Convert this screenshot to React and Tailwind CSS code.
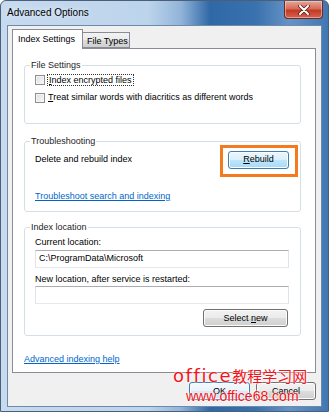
import React from 'react';

const btnBase =
  "h-[18px] flex items-center justify-center rounded-[3px] border text-[9px] leading-none shadow-[inset_0_0_0_1px_#fcfcfc]";
const btnNormal =
  "border-[#707070] bg-[linear-gradient(#f2f2f2_0%,#ebebeb_50%,#dddddd_50%,#cfcfcf_100%)]";
const btnHot =
  "border-[#3c7fb1] bg-[linear-gradient(#eaf6fd_0%,#d9f0fc_50%,#bee6fd_50%,#a7d9f5_100%)]";

const Checkbox = () => (
  <span className="w-[10px] h-[10px] shrink-0 border border-[#8e8f8f] bg-[linear-gradient(135deg,#dcdcdc,#fafafa)] shadow-[inset_0_0_0_1px_#f4f4f4]" />
);

const Group = ({ title, className = "", children }) => (
  <fieldset className={`border border-[#d5dfe5] rounded-[3px] ${className}`}>
    <legend className="ml-[5px] px-[1px] leading-[14px] text-[#1e1e1e]">{title}</legend>
    {children}
  </fieldset>
);

const TextBox = ({ value }) => (
  <div className="h-[18px] flex items-center pl-[3px] bg-white border border-[#e2e3ea] border-t-[#abadb3] border-b-[#e3e9ef]">
    {value}
  </div>
);

const CloseButton = () => (
  <div className="w-[39px] h-[18px] flex items-center justify-center rounded-b-[4px] border border-t-0 border-[#6b2a22] bg-[linear-gradient(#e8a595_0%,#d66c5b_45%,#c23a26_55%,#d4624d_100%)] shadow-[inset_0_0_0_1px_rgba(255,220,210,0.5)]">
    <svg width="12" height="10" viewBox="0 0 12 10">
      <path d="M2 1 L10 9 M10 1 L2 9" stroke="#5a1e16" strokeWidth="3.6" strokeLinecap="round" />
      <path d="M2 1 L10 9 M10 1 L2 9" stroke="#ffffff" strokeWidth="2" strokeLinecap="round" />
    </svg>
  </div>
);

const App = () => {
  return (
    <div className="relative w-[329px] h-[412px] overflow-hidden rounded-t-[6px] border border-[#4c5f77] bg-[linear-gradient(90deg,#c6daf0_0%,#bcd4ec_45%,#92b4d9_55%,#2f68a6_64%,#3a72ae_78%,#6593c6_88%,#4077b3_100%)] font-['Liberation_Sans',Arial,sans-serif] text-[9px] text-black">
      {/* title bar */}
      <div className="h-[24px] flex items-start justify-between pl-[6px] pr-[5px]">
        <span className="mt-[6px] text-[10px] leading-[12px] [text-shadow:0_0_6px_#ffffff]">Advanced Options</span>
        <CloseButton />
      </div>

      {/* client area */}
      <div className="mx-[6px] h-[382px] border border-[#6f8aa8] bg-[#f0f0f0] pt-[3px] pl-[4px] pr-[5px]">
        {/* tabs */}
        <div className="h-[19px] flex items-end">
          <div className="relative z-10 w-[71px] h-[20px] -mb-px border border-b-0 border-[#898c95] bg-white pl-[5px] pt-[3px] leading-[12px]">
            Index Settings
          </div>
          <div className="w-[47px] h-[16px] border border-l-0 border-[#898c95] bg-[linear-gradient(#f2f2f2_0%,#ebebeb_50%,#dddddd_50%,#cfcfcf_100%)] pl-[4px] pt-[2px] leading-[12px]">
            File Types
          </div>
        </div>

        {/* tab panel */}
        <div className="h-[325px] border border-[#898c95] bg-white pt-[9px] pl-[11px] pr-[14px]">
          <Group title="File Settings">
            <div className="pt-[1px] pb-[18px] pl-[10px] pr-[11px] flex flex-col gap-[4px]">
              <label className="h-[14px] flex items-center gap-[2px]">
                <Checkbox />
                <span className="border border-dotted border-[#333] px-[1px] leading-[10px]">
                  <u>I</u>ndex encrypted files
                </span>
              </label>
              <label className="h-[14px] flex items-center gap-[3px]">
                <Checkbox />
                <span><u>T</u>reat similar words with diacritics as different words</span>
              </label>
            </div>
          </Group>

          <Group title="Troubleshooting" className="mt-[10px]">
            <div className="pt-[3px] pb-[8px] pl-[10px] pr-[11px]">
              <div className="h-[17px] flex items-center justify-between">
                <span>Delete and rebuild index</span>
                <div className="relative">
                  <div className="absolute -left-[8px] -right-[9px] -top-[6px] -bottom-[8px] border-[3px] border-[#f47a20]" />
                  <div className={`${btnBase} ${btnHot} w-[61px] h-[17px]`}>
                    <span><u>R</u>ebuild</span>
                  </div>
                </div>
              </div>
              <a className="mt-[21px] block w-fit h-[14px] leading-[14px] text-[#0066cc] underline">
                Troubleshoot search and indexing
              </a>
            </div>
          </Group>

          <Group title="Index location" className="mt-[8px]">
            <div className="pt-[1px] pb-[8px] pl-[10px] pr-[11px] flex flex-col">
              <span className="h-[14px] leading-[14px]">Current location:</span>
              <div className="mt-[1px]">
                <TextBox value="C:\ProgramData\Microsoft" />
              </div>
              <span className="mt-[4px] h-[14px] leading-[14px]">New location, after service is restarted:</span>
              <TextBox value="" />
              <div className={`${btnBase} ${btnNormal} mt-[5px] self-end mr-[1px] w-[85px]`}>
                <span>Select <u>n</u>ew</span>
              </div>
            </div>
          </Group>

          <a className="mt-[16px] block w-fit h-[14px] leading-[14px] text-[#0066cc] underline">
            Advanced indexing help
          </a>
        </div>

        {/* dialog buttons */}
        <div className="mt-[9px] flex justify-end gap-[6px]">
          <div className={`${btnBase} w-[61px] border-[#3c7fb1] bg-[linear-gradient(#f4f9fd_0%,#eaf3fb_50%,#dbe9f6_50%,#cfe1f3_100%)] shadow-[inset_0_0_0_1px_#9fd3f4]`}>
            OK
          </div>
          <div className={`${btnBase} ${btnNormal} w-[60px]`}>Cancel</div>
        </div>
      </div>

      {/* watermark over the dialog */}
      <div className="absolute left-[172px] top-[364px] flex items-baseline text-[#f2141a] [text-shadow:0_0_2px_#ffffff,0_0_2px_#ffffff]">
        <span className="font-['DejaVu_Sans',sans-serif] text-[18px] tracking-[1.6px] leading-[22px]">office</span>
        <span className="font-['Noto_Sans_CJK_SC',sans-serif] text-[15px] leading-[22px]">教程学习网</span>
      </div>
      <div className="absolute left-[185px] top-[388px] font-['Liberation_Sans',Arial,sans-serif] text-[14px] leading-[14px] text-[#f2141a] [text-shadow:0_0_2px_#ffffff,0_0_2px_#ffffff]">
        www.office68.com
      </div>
    </div>
  );
};

export default App;
